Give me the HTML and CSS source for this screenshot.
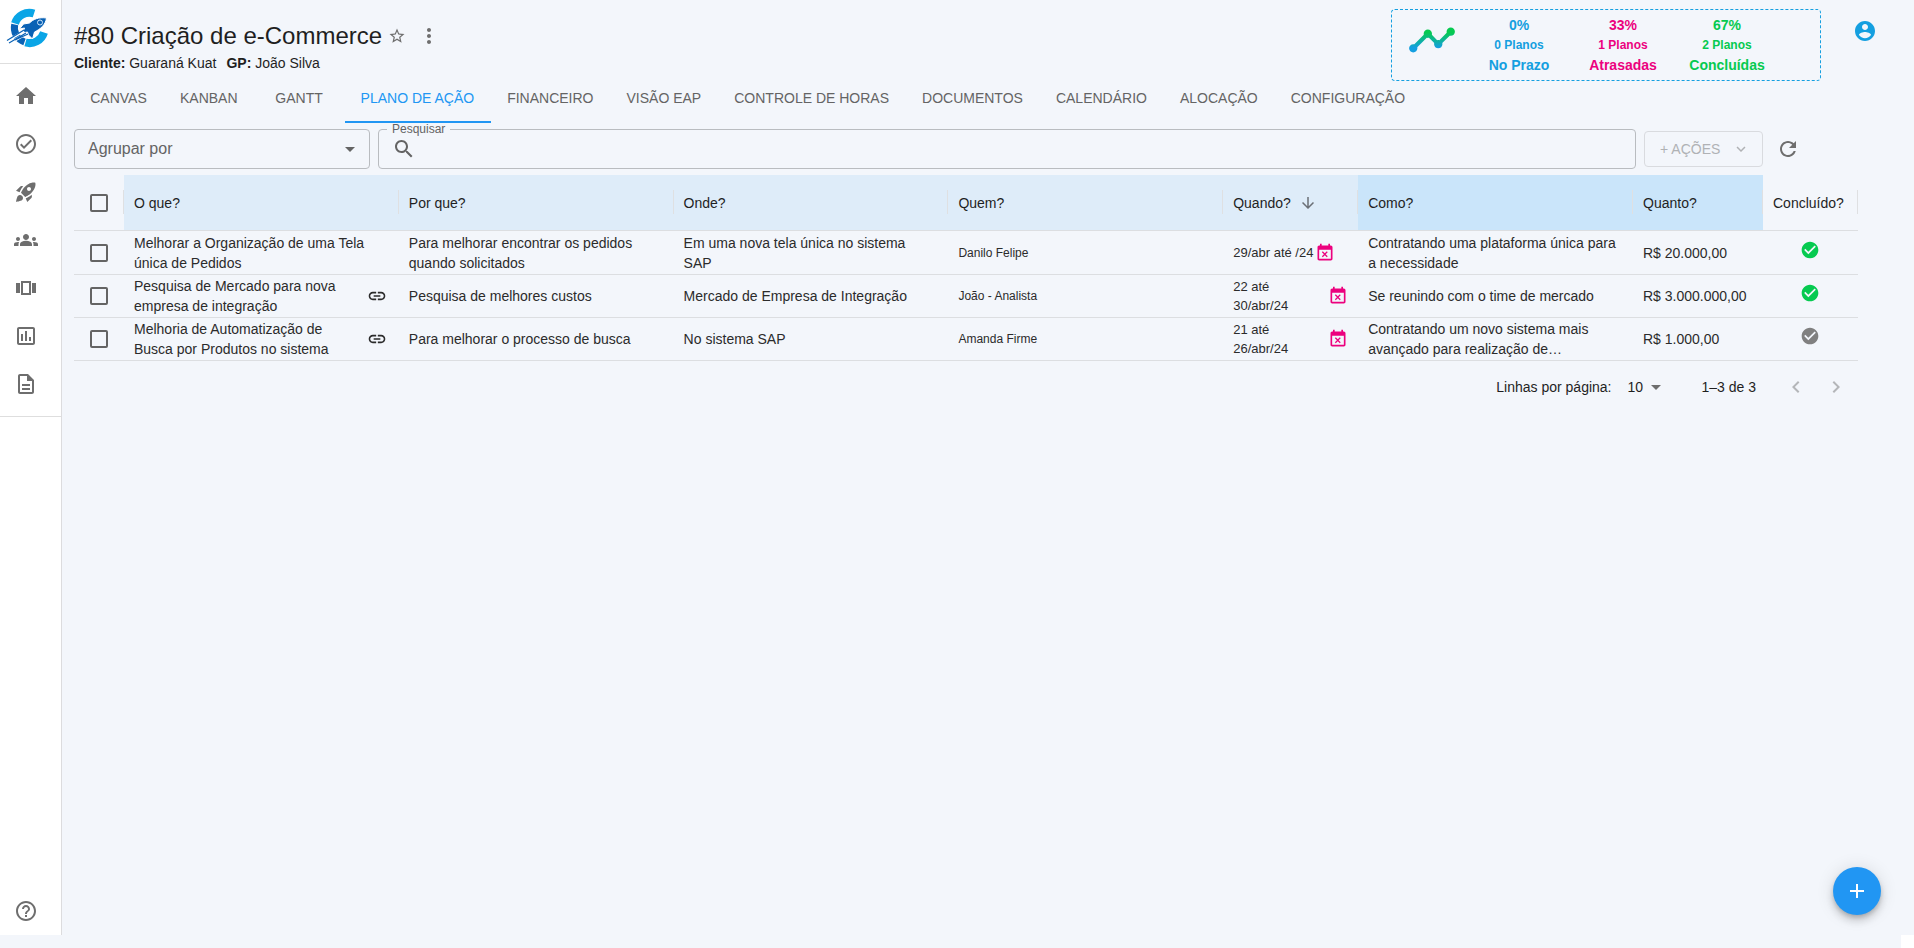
FILE: index.html
```html
<!DOCTYPE html>
<html lang="pt-BR">
<head>
<meta charset="utf-8">
<title>#80 Criação de e-Commerce</title>
<link rel="stylesheet" href="styles.css">
</head>
<body>
<div class="app">
  <nav class="sidebar" aria-label="Principal">
    <a class="logo" href="#" aria-label="Início">
      <svg width="44" height="42" viewBox="0 0 44 42">
        <path d="M28 6.500A15 15 0 0 0 9 16.500" fill="none" stroke="#0aa5e6" stroke-width="8"/>
        <path d="M8.700 17.500A15 15 0 0 0 18.500 35" fill="none" stroke="#0a62b5" stroke-width="7"/>
        <path d="M19.500 35.500A15 15 0 0 0 38 25.500" fill="none" stroke="#0aa5e6" stroke-width="8"/>
        <path d="M40.500 11c-8-1-13 1-17 5l-6 1-4 5 5-1-2 5 5-1 1 3 4 4 2-7c6-3 11-7 12-14z" fill="#0a62b5" stroke="#fff" stroke-width="1"/>
        <circle cx="34" cy="15.500" r="2.500" fill="#0a62b5" stroke="#cfe6f8" stroke-width="1"/>
        <path d="M1 34 18 24M3 36.500 20 27" stroke="#fff" stroke-width="2.600"/>
        <path d="M1 33.500 18 23M3 36 20 26M9 33 22 27" stroke="#0a62b5" stroke-width="1.200"/>
      </svg>
    </a>
    <div class="nav-list">
      <a href="#" aria-label="Home"><svg class="icon" viewBox="0 0 24 24"><path d="M10 20v-6h4v6h5v-8h3L12 3 2 12h3v8z"/></svg></a>
      <a href="#" aria-label="Tarefas"><svg class="icon" viewBox="0 0 24 24"><path d="M16.590 7.580 10 14.170l-2.590-2.580L6 13l4 4 8-8zM12 2C6.480 2 2 6.480 2 12s4.480 10 10 10 10-4.480 10-10S17.520 2 12 2zm0 18c-4.420 0-8-3.580-8-8s3.580-8 8-8 8 3.580 8 8-3.580 8-8 8z"/></svg></a>
      <a href="#" aria-label="Projetos"><svg class="icon" viewBox="0 0 24 24"><path d="M9.190 6.350c-2.040 2.290-3.440 5.580-3.570 5.890L2 10.690l4.050-4.050c.47-.47 1.150-.68 1.810-.55l1.330.26zM11.170 17s3.740-1.550 5.890-3.700c5.400-5.400 4.500-9.620 4.210-10.570-.95-.3-5.170-1.190-10.570 4.210C8.550 9.090 7 12.830 7 12.830L11.170 17zm6.480-2.190c-2.290 2.040-5.580 3.440-5.890 3.570L13.310 22l4.050-4.050c.47-.47.68-1.150.55-1.810l-.26-1.330zM9 18c0 .83-.34 1.580-.88 2.120C6.940 21.300 2 22 2 22s.7-4.940 1.880-6.120C4.420 15.340 5.170 15 6 15c1.660 0 3 1.340 3 3zm4-9c0-1.100.9-2 2-2s2 .9 2 2-.9 2-2 2-2-.9-2-2z"/></svg></a>
      <a href="#" aria-label="Equipe"><svg class="icon" viewBox="0 0 24 24"><path d="M12 12.750c1.630 0 3.070.39 4.240.9 1.080.48 1.760 1.560 1.760 2.730V18H6v-1.610c0-1.180.68-2.260 1.760-2.730 1.170-.52 2.610-.91 4.240-.91zM4 13c1.100 0 2-.9 2-2s-.9-2-2-2-2 .9-2 2 .9 2 2 2zm1.130 1.100c-.37-.06-.74-.1-1.130-.1-.99 0-1.930.21-2.780.58C.48 14.900 0 15.620 0 16.430V18h4.500v-1.610c0-.83.23-1.610.63-2.290zM20 13c1.100 0 2-.9 2-2s-.9-2-2-2-2 .9-2 2 .9 2 2 2zm4 3.430c0-.81-.48-1.530-1.220-1.850-.85-.37-1.790-.58-2.780-.58-.39 0-.76.04-1.130.1.4.68.63 1.460.63 2.290V18H24v-1.570zM12 6c1.660 0 3 1.340 3 3s-1.340 3-3 3-3-1.340-3-3 1.340-3 3-3z"/></svg></a>
      <a href="#" aria-label="Portfólio"><svg class="icon" viewBox="0 0 24 24"><path d="M2 7h4v10H2V7zm5 12h10V5H7v14zM9 7h6v10H9V7zm9 0h4v10h-4V7z"/></svg></a>
      <a href="#" aria-label="Relatórios"><svg class="icon" viewBox="0 0 24 24"><path d="M9 17H7v-7h2v7zm4 0h-2V7h2v10zm4 0h-2v-4h2v4zm2 2H5V5h14v14zm0-16H5c-1.100 0-2 .9-2 2v14c0 1.100.9 2 2 2h14c1.100 0 2-.9 2-2V5c0-1.100-.9-2-2-2z"/></svg></a>
      <a href="#" aria-label="Documentos"><svg class="icon" viewBox="0 0 24 24"><path d="M8 16h8v2H8zm0-4h8v2H8zm6-10H6c-1.100 0-2 .9-2 2v16c0 1.100.89 2 1.990 2H18c1.100 0 2-.9 2-2V8l-6-6zm4 18H6V4h7v5h5v11z"/></svg></a>
    </div>
    <a class="help" href="#" aria-label="Ajuda"><svg class="icon" viewBox="0 0 24 24"><path d="M11 18h2v-2h-2v2zm1-16C6.480 2 2 6.480 2 12s4.480 10 10 10 10-4.480 10-10S17.520 2 12 2zm0 18c-4.410 0-8-3.590-8-8s3.590-8 8-8 8 3.590 8 8-3.590 8-8 8zm0-14c-2.210 0-4 1.790-4 4h2c0-1.100.9-2 2-2s2 .9 2 2c0 2-3 1.750-3 5h2c0-2.250 3-2.500 3-5 0-2.210-1.790-4-4-4z"/></svg></a>
  </nav>

  <main class="main">
    <header class="header">
      <div class="heading">
        <div class="title-row">
          <h1>#80 Criação de e-Commerce</h1>
          <button class="icon-btn star" aria-label="Favoritar"><svg width="18" height="18" viewBox="0 0 24 24"><path d="m22 9.240-7.190-.62L12 2 9.190 8.630 2 9.240l5.460 4.730L5.820 21 12 17.270 18.180 21l-1.630-7.030L22 9.240zM12 15.400l-3.760 2.270 1-4.280-3.320-2.880 4.380-.38L12 6.100l1.710 4.040 4.380.38-3.320 2.880 1 4.280L12 15.400z"/></svg></button>
          <button class="icon-btn" aria-label="Mais opções"><svg class="icon" viewBox="0 0 24 24"><path d="M12 8c1.100 0 2-.9 2-2s-.9-2-2-2-2 .9-2 2 .9 2 2 2zm0 2c-1.100 0-2 .9-2 2s.9 2 2 2 2-.9 2-2-.9-2-2-2zm0 6c-1.100 0-2 .9-2 2s.9 2 2 2 2-.9 2-2-.9-2-2-2z"/></svg></button>
        </div>
        <p class="meta"><span><b>Cliente:</b> Guaraná Kuat</span><span><b>GP:</b> João Silva</span></p>
      </div>
      <section class="stats" aria-label="Resumo dos planos">
        <svg class="trend" width="50" height="50" viewBox="0 0 24 24">
          <defs><linearGradient id="trend" x1="0" y1="0" x2="0" y2="1"><stop offset=".2" stop-color="#06ca50"/><stop offset=".8" stop-color="#149fe0"/></linearGradient></defs>
          <path fill="url(#trend)" d="M23 8c0 1.100-.9 2-2 2-.18 0-.35-.02-.51-.07l-3.560 3.550c.05.16.07.34.07.52 0 1.100-.9 2-2 2s-2-.9-2-2c0-.18.02-.36.07-.52l-2.550-2.550c-.16.05-.34.07-.52.07s-.36-.02-.52-.07l-4.550 4.560c.05.16.07.33.07.51 0 1.100-.9 2-2 2s-2-.9-2-2 .9-2 2-2c.18 0 .35.02.51.07l4.560-4.550C8.020 9.360 8 9.180 8 9c0-1.100.9-2 2-2s2 .9 2 2c0 .18-.02.36-.07.52l2.550 2.550c.16-.05.34-.07.52-.07s.36.02.52.07l3.550-3.560C19.020 8.350 19 8.180 19 8c0-1.100.9-2 2-2s2 .9 2 2z"/>
        </svg>
        <div class="stat blue"><span>0%</span><small>0 Planos</small><span>No Prazo</span></div>
        <div class="stat pink"><span>33%</span><small>1 Planos</small><span>Atrasadas</span></div>
        <div class="stat green"><span>67%</span><small>2 Planos</small><span>Concluídas</span></div>
      </section>
      <button class="icon-btn account" aria-label="Conta"><svg class="icon" viewBox="0 0 24 24"><path d="M12 2C6.480 2 2 6.480 2 12s4.480 10 10 10 10-4.480 10-10S17.520 2 12 2zm0 3c1.660 0 3 1.340 3 3s-1.340 3-3 3-3-1.340-3-3 1.340-3 3-3zm0 14.200c-2.500 0-4.710-1.280-6-3.220.03-1.990 4-3.080 6-3.080 1.990 0 5.970 1.090 6 3.080-1.290 1.940-3.500 3.220-6 3.220z"/></svg></button>
    </header>

    <nav class="tabs" aria-label="Seções do projeto">
      <a href="#">Canvas</a><a href="#">Kanban</a><a href="#">Gantt</a><a class="active" href="#" aria-current="page">Plano de Ação</a><a href="#">Financeiro</a><a href="#">Visão EAP</a><a href="#">Controle de Horas</a><a href="#">Documentos</a><a href="#">Calendário</a><a href="#">Alocação</a><a href="#">Configuração</a>
    </nav>

    <div class="content">
      <div class="toolbar">
        <div class="group-select">
          <select aria-label="Agrupar por"><option>Agrupar por</option></select>
          <svg class="icon" viewBox="0 0 24 24"><path d="m7 10 5 5 5-5z"/></svg>
        </div>
        <div class="search">
          <label for="search">Pesquisar</label>
          <svg class="icon" viewBox="0 0 24 24"><path d="M15.500 14h-.79l-.28-.27C15.410 12.590 16 11.110 16 9.500 16 5.910 13.090 3 9.500 3S3 5.910 3 9.500 5.910 16 9.500 16c1.610 0 3.090-.59 4.230-1.570l.27.28v.79l5 4.990L20.490 19l-4.990-5zm-6 0C7.010 14 5 11.990 5 9.500S7.010 5 9.500 5 14 7.010 14 9.500 11.990 14 9.500 14z"/></svg>
          <input id="search" type="text">
        </div>
        <button class="actions" disabled>+ AÇÕES <svg width="18" height="18" viewBox="0 0 24 24"><path d="M7.410 8.590 12 13.170l4.590-4.580L18 10l-6 6-6-6 1.410-1.410z"/></svg></button>
        <button class="icon-btn refresh" aria-label="Atualizar"><svg class="icon" viewBox="0 0 24 24"><path d="M17.650 6.350C16.200 4.900 14.210 4 12 4c-4.420 0-7.990 3.580-7.990 8s3.570 8 7.990 8c3.730 0 6.840-2.550 7.730-6h-2.080c-.82 2.330-3.040 4-5.650 4-3.310 0-6-2.690-6-6s2.690-6 6-6c1.660 0 3.140.69 4.220 1.780L13 11h7V4l-2.350 2.350z"/></svg></button>
      </div>

      <table class="grid">
        <colgroup><col class="c-check"><col><col><col><col><col class="c-when"><col><col class="c-cost"><col class="c-done"></colgroup>
        <thead>
          <tr>
            <th class="check"><input type="checkbox" aria-label="Selecionar todos"></th>
            <th class="light">O que?</th>
            <th class="light">Por que?</th>
            <th class="light">Onde?</th>
            <th class="light">Quem?</th>
            <th class="light"><span class="sorted">Quando? <svg width="18" height="18" viewBox="0 0 24 24"><path d="m20 12-1.410-1.410L13 16.170V4h-2v12.170l-5.580-5.590L4 12l8 8 8-8z"/></svg></span></th>
            <th class="deep">Como?</th>
            <th class="deep">Quanto?</th>
            <th>Concluído?</th>
          </tr>
        </thead>
        <tbody>
          <tr>
            <td class="check"><input type="checkbox" aria-label="Selecionar linha 1"></td>
            <td>Melhorar a Organização de uma Tela única de Pedidos</td>
            <td>Para melhorar encontrar os pedidos quando solicitados</td>
            <td>Em uma nova tela única no sistema SAP</td>
            <td class="who">Danilo Felipe</td>
            <td class="when"><div class="date single"><span>29/abr até /24</span><svg width="20" height="20" viewBox="0 0 24 24"><path d="m9.310 17 2.440-2.440L14.190 17l1.060-1.060-2.440-2.440 2.440-2.440L14.190 10l-2.440 2.440L9.310 10l-1.060 1.060 2.440 2.440-2.440 2.440L9.310 17zM19 3h-1V1h-2v2H8V1H6v2H5c-1.110 0-1.990.9-1.990 2L3 19c0 1.100.89 2 2 2h14c1.100 0 2-.9 2-2V5c0-1.100-.9-2-2-2zm0 16H5V8h14v11z"/></svg></div></td>
            <td>Contratando uma plataforma única para a necessidade</td>
            <td>R$ 20.000,00</td>
            <td class="done"><svg width="20" height="20" viewBox="0 0 24 24"><path d="M12 2C6.480 2 2 6.480 2 12s4.480 10 10 10 10-4.480 10-10S17.520 2 12 2zm-2 15-5-5 1.410-1.410L10 14.170l7.590-7.590L19 8l-9 9z"/></svg></td>
          </tr>
          <tr>
            <td class="check"><input type="checkbox" aria-label="Selecionar linha 2"></td>
            <td><div class="linked"><span>Pesquisa de Mercado para nova empresa de integração</span><svg width="20" height="20" viewBox="0 0 24 24"><path d="M3.900 12c0-1.710 1.390-3.100 3.100-3.100h4V7H7c-2.760 0-5 2.240-5 5s2.240 5 5 5h4v-1.900H7c-1.710 0-3.100-1.390-3.100-3.100zM8 13h8v-2H8v2zm9-6h-4v1.900h4c1.710 0 3.100 1.390 3.100 3.100s-1.390 3.100-3.100 3.100h-4V17h4c2.760 0 5-2.240 5-5s-2.240-5-5-5z"/></svg></div></td>
            <td>Pesquisa de melhores custos</td>
            <td>Mercado de Empresa de Integração</td>
            <td class="who">João - Analista</td>
            <td class="when"><div class="date"><span>22 até 30/abr/24</span><svg width="20" height="20" viewBox="0 0 24 24"><path d="m9.310 17 2.440-2.440L14.190 17l1.060-1.060-2.440-2.440 2.440-2.440L14.190 10l-2.440 2.440L9.310 10l-1.060 1.060 2.440 2.440-2.440 2.440L9.310 17zM19 3h-1V1h-2v2H8V1H6v2H5c-1.110 0-1.990.9-1.990 2L3 19c0 1.100.89 2 2 2h14c1.100 0 2-.9 2-2V5c0-1.100-.9-2-2-2zm0 16H5V8h14v11z"/></svg></div></td>
            <td>Se reunindo com o time de mercado</td>
            <td>R$ 3.000.000,00</td>
            <td class="done"><svg width="20" height="20" viewBox="0 0 24 24"><path d="M12 2C6.480 2 2 6.480 2 12s4.480 10 10 10 10-4.480 10-10S17.520 2 12 2zm-2 15-5-5 1.410-1.410L10 14.170l7.590-7.590L19 8l-9 9z"/></svg></td>
          </tr>
          <tr>
            <td class="check"><input type="checkbox" aria-label="Selecionar linha 3"></td>
            <td><div class="linked"><span>Melhoria de Automatização de Busca por Produtos no sistema</span><svg width="20" height="20" viewBox="0 0 24 24"><path d="M3.900 12c0-1.710 1.390-3.100 3.100-3.100h4V7H7c-2.760 0-5 2.240-5 5s2.240 5 5 5h4v-1.900H7c-1.710 0-3.100-1.390-3.100-3.100zM8 13h8v-2H8v2zm9-6h-4v1.900h4c1.710 0 3.100 1.390 3.100 3.100s-1.390 3.100-3.100 3.100h-4V17h4c2.760 0 5-2.240 5-5s-2.240-5-5-5z"/></svg></div></td>
            <td>Para melhorar o processo de busca</td>
            <td>No sistema SAP</td>
            <td class="who">Amanda Firme</td>
            <td class="when"><div class="date"><span>21 até 26/abr/24</span><svg width="20" height="20" viewBox="0 0 24 24"><path d="m9.310 17 2.440-2.440L14.190 17l1.060-1.060-2.440-2.440 2.440-2.440L14.190 10l-2.440 2.440L9.310 10l-1.060 1.060 2.440 2.440-2.440 2.440L9.310 17zM19 3h-1V1h-2v2H8V1H6v2H5c-1.110 0-1.990.9-1.990 2L3 19c0 1.100.89 2 2 2h14c1.100 0 2-.9 2-2V5c0-1.100-.9-2-2-2zm0 16H5V8h14v11z"/></svg></div></td>
            <td>Contratando um novo sistema mais avançado para realização de…</td>
            <td>R$ 1.000,00</td>
            <td class="done pending"><svg width="20" height="20" viewBox="0 0 24 24"><path d="M12 2C6.480 2 2 6.480 2 12s4.480 10 10 10 10-4.480 10-10S17.520 2 12 2zm-2 15-5-5 1.410-1.410L10 14.170l7.590-7.590L19 8l-9 9z"/></svg></td>
          </tr>
        </tbody>
      </table>

      <div class="pagination">
        <label for="rows">Linhas por página:</label>
        <div class="rows-select">
          <select id="rows"><option>10</option></select>
          <svg class="icon" viewBox="0 0 24 24"><path d="m7 10 5 5 5-5z"/></svg>
        </div>
        <span class="range">1–3 de 3</span>
        <div class="pager">
          <button disabled aria-label="Página anterior"><svg class="icon" viewBox="0 0 24 24"><path d="M15.410 7.410 14 6l-6 6 6 6 1.410-1.410L10.830 12z"/></svg></button>
          <button disabled aria-label="Próxima página"><svg class="icon" viewBox="0 0 24 24"><path d="M10 6 8.590 7.410 13.170 12l-4.580 4.590L10 18l6-6z"/></svg></button>
        </div>
      </div>
    </div>
  </main>
  <div class="corner"></div>
</div>
<button class="fab" aria-label="Adicionar"><svg class="icon" viewBox="0 0 24 24"><path d="M19 13h-6v6h-2v-6H5v-2h6V5h2v6h6v2z"/></svg></button>
</body>
</html>
```
FILE: styles.css
```css
* { box-sizing: border-box; }

body {
  margin: 0;
  background: #f3f6fb;
  color: #1f1f1f;
  font: 14px/20px "Liberation Sans", Arial, sans-serif;
}

a { color: inherit; text-decoration: none; }

button, select, input { font: inherit; color: inherit; }

svg { display: block; flex: none; fill: currentColor; }

.icon { width: 24px; height: 24px; }

.app {
  display: grid;
  grid-template-columns: 62px 1fr;
  grid-template-rows: 1fr 13px;
  min-height: 100vh;
}

.sidebar {
  display: flex;
  flex-direction: column;
  background: #fff;
  border-right: 1px solid #dcdcde;
  color: #6e6e6e;
}

.logo {
  height: 64px;
  padding: 7px 0 0 6px;
  border-bottom: 1px solid #dedede;
}

.nav-list {
  padding: 8px 0;
  border-bottom: 1px solid #dedede;
}

.nav-list a, .help {
  display: flex;
  align-items: center;
  height: 48px;
  padding-left: 14px;
}

.help { margin-top: auto; }

.main { min-width: 0; padding-left: 12px; }

.corner {
  grid-column: 2;
  justify-self: end;
  width: 13px;
  background: #fff;
}

.header {
  display: flex;
  height: 82px;
  padding: 9px 37px 0 0;
}

.heading { flex: 1; padding-top: 11px; }

.title-row { display: flex; align-items: center; height: 32px; }

h1 { margin: 0; font-size: 24px; font-weight: 400; line-height: 32px; }

.icon-btn {
  display: flex;
  padding: 0;
  border: 0;
  background: none;
  color: #6e6e6e;
}

.star { margin: 0 11px 0 6px; }

.meta { display: flex; gap: 10px; margin: 0; line-height: 22px; }

.stats {
  display: flex;
  align-items: center;
  width: 430px;
  height: 72px;
  padding-left: 15px;
  border: 1px dashed #149fe0;
  border-radius: 4px;
}

.trend { margin-bottom: 10px; }

.stat {
  display: flex;
  flex-direction: column;
  align-items: center;
  width: 104px;
  font-weight: 700;
  line-height: 20px;
}

.stat:first-of-type { margin-left: 10px; }

.stat small { font-size: 12px; }

.blue { color: #149fe0; }
.pink { color: #ec017e; }
.green { color: #06ca50; }

.account { align-self: flex-start; margin: 10px 0 0 32px; color: #149fe0; }

.tabs { display: flex; height: 41px; color: #646464; text-transform: uppercase; }

.tabs a { min-width: 90px; padding: 6px 17px 6px 16px; text-align: center; }

.tabs .active { color: #2196f3; border-bottom: 2px solid #2196f3; }

.content { padding-right: 56px; }

.toolbar { display: flex; align-items: center; gap: 8px; margin: 6px 0; }

.group-select, .search {
  position: relative;
  display: flex;
  align-items: center;
  height: 40px;
  border: 1px solid #b9bcc0;
  border-radius: 4px;
  color: #646464;
}

.group-select { width: 296px; }

.group-select select {
  width: 100%;
  height: 38px;
  padding: 0 32px 0 13px;
  border: 0;
  background: none;
  appearance: none;
  font-size: 16px;
}

.group-select .icon { position: absolute; right: 7px; pointer-events: none; }

.search { flex: 1; padding-left: 13px; }

.search label {
  position: absolute;
  top: -7px;
  left: 8px;
  padding: 0 5px;
  background: #f3f6fb;
  font-size: 12px;
  line-height: 12px;
}

.search input { flex: 1; height: 38px; border: 0; background: none; outline: 0; }

.actions {
  display: flex;
  align-items: center;
  justify-content: space-between;
  width: 119px;
  height: 36px;
  padding: 0 12px 0 15px;
  border: 1px solid #d9dbdf;
  border-radius: 4px;
  background: none;
  color: #b0b2b5;
}

.refresh { margin: 0 58px 0 5px; }

.grid { width: 100%; table-layout: fixed; border-collapse: separate; border-spacing: 0; }

.c-check { width: 50px; }
.c-when { width: 135px; }
.c-cost { width: 130px; }
.c-done { width: 95px; }

.grid th, .grid td {
  height: 43px;
  padding: 0 12px 0 10px;
  border-bottom: 1px solid #dcdee1;
  text-align: left;
  font-weight: 400;
}

.grid tbody tr:first-child td { height: 44px; }

.grid th {
  position: relative;
  height: 56px;
}

.grid th::after {
  content: "";
  position: absolute;
  top: 15px;
  right: 0;
  width: 1px;
  height: 24px;
  background: #dfe0e2;
}

.grid td { color: #2b2b2b; }

.grid .light { background: #deecf9; }
.grid .deep { background: #cae5fa; }

.grid .check { padding: 0 16px; }

.grid input {
  display: block;
  width: 18px;
  height: 18px;
  margin: 0;
  border: 2px solid #646464;
  border-radius: 2px;
  appearance: none;
}

.sorted { display: flex; align-items: center; gap: 8px; }
.sorted svg { color: #6b6f76; }

.linked, .date { display: flex; align-items: center; justify-content: space-between; }

.linked { gap: 12px; }

.grid .when { padding-right: 10px; font-size: 13px; line-height: 19px; }

.date svg { color: #ec017e; }
.date:not(.single) span { width: 64px; }
.date.single { justify-content: flex-start; gap: 2px; white-space: nowrap; }

.grid .who { font-size: 12px; }

.grid .done { padding-bottom: 6px; color: #06ca50; }
.grid .pending { color: #808080; }
.done svg { margin: 0 auto; }

.pagination {
  display: flex;
  align-items: center;
  justify-content: flex-end;
  height: 52px;
  padding-right: 2px;
}

.rows-select { position: relative; display: flex; align-items: center; margin: 0 34px 0 8px; }

.rows-select select {
  width: 48px;
  height: 24px;
  padding: 0 24px 0 8px;
  border: 0;
  background: none;
  appearance: none;
}

.rows-select .icon { position: absolute; right: 0; color: #6e6e6e; pointer-events: none; }

.pager { display: flex; margin-left: 20px; }

.pager button { padding: 8px; border: 0; background: none; color: #b4b6b9; }

.fab {
  position: fixed;
  right: 33px;
  bottom: 33px;
  display: flex;
  align-items: center;
  justify-content: center;
  width: 48px;
  height: 48px;
  padding: 0;
  border: 0;
  border-radius: 50%;
  background: #2196f3;
  color: #fff;
  box-shadow: 0 3px 5px -1px rgba(0, 0, 0, .2), 0 6px 10px rgba(0, 0, 0, .14), 0 1px 18px rgba(0, 0, 0, .12);
}
```
